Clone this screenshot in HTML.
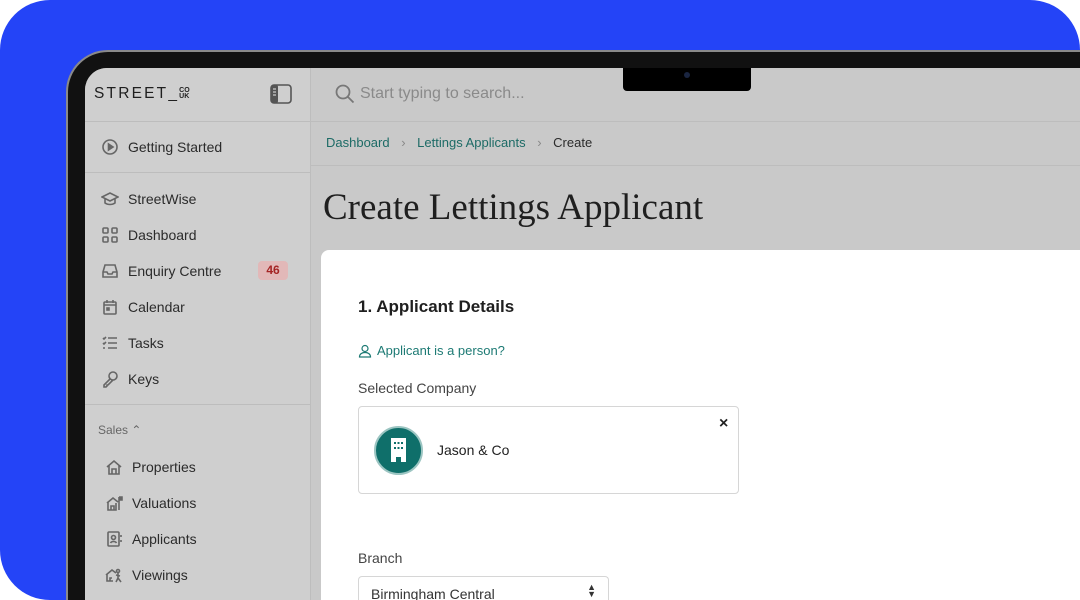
<!DOCTYPE html>
<html><head><style>
*{margin:0;padding:0;box-sizing:border-box}
html,body{width:1080px;height:600px;overflow:hidden}
body{background:#fff;font-family:"Liberation Sans",sans-serif;position:relative}
.bg{position:absolute;inset:0;background:#2444f7;border-radius:50px 50px 0 50px}
.frame{position:absolute;left:66px;top:50px;width:1014px;height:550px;background:#111;border:2px solid #8a8a8a;border-bottom:none;border-right:none;border-radius:42px 0 0 0}
.screen{position:absolute;left:85px;top:68px;width:995px;height:532px;background:#c9c9c9;border-radius:22px 0 0 0;overflow:hidden}
.side{position:absolute;left:0;top:0;width:226px;height:532px;background:#cfcfcf;border-right:1px solid #bdbdbd}
.hline{position:absolute;left:0;right:0;height:1px;background:#bdbdbd}
.item{position:absolute;left:16px;display:flex;align-items:center;font-size:14px;color:#2b2b2b}
.item svg{width:18px;height:18px;margin-right:9px;fill:none;stroke:#666;stroke-width:1.6}
.notch{position:absolute;left:623px;top:68px;width:128px;height:23px;background:#000;border-radius:0 0 4px 4px}
.card{position:absolute;left:236px;top:182px;width:759px;height:350px;background:#fff;border-radius:8px 0 0 0}
</style></head><body>
<div class="bg"></div>
<div class="frame"></div>
<div class="screen">
 <div class="side">
  <div style="position:absolute;left:9px;top:17px;font-size:15.5px;letter-spacing:2.2px;color:#1f1f1f;font-weight:400">STREET_<span style="font-size:7px;letter-spacing:0;display:inline-block;line-height:6px;vertical-align:middle;font-weight:bold">CO<br>UK</span></div>
  <svg style="position:absolute;left:185px;top:16px" width="22" height="20" viewBox="0 0 22 20"><rect x="1" y="1" width="20" height="18" rx="3" fill="none" stroke="#555" stroke-width="1.6"/><rect x="1" y="1" width="7" height="18" rx="2" fill="#555"/><path d="M3 5h3M3 8h3M3 11h3" stroke="#ccc" stroke-width="1.2"/></svg>
  <div class="hline" style="top:53px"></div>
  <div class="item" style="top:70px"><svg viewBox="0 0 18 18"><circle cx="9" cy="9" r="7"/><path d="M7.5 6v6l4.5-3z" fill="#666"/></svg>Getting Started</div>
  <div class="hline" style="top:104px"></div>
  <div class="item" style="top:122px"><svg viewBox="0 0 18 18"><path d="M1 7l8-4 8 4-8 4z M4 9v4c3 2 7 2 10 0V9"/></svg>StreetWise</div>
  <div class="item" style="top:158px"><svg viewBox="0 0 18 18"><rect x="2" y="2" width="5" height="5" rx="1"/><rect x="11" y="2" width="5" height="5" rx="1"/><rect x="2" y="11" width="5" height="5" rx="1"/><rect x="11" y="11" width="5" height="5" rx="1"/></svg>Dashboard</div>
  <div class="item" style="top:194px"><svg viewBox="0 0 18 18"><path d="M2 10l2-7h10l2 7v5H2z M2 10h4l1 2h4l1-2h4"/></svg>Enquiry Centre</div>
  <div style="position:absolute;left:173px;top:193px;width:30px;height:19px;background:#e2b8b8;border-radius:4px;color:#a42424;font-size:12px;font-weight:bold;text-align:center;line-height:19px">46</div>
  <div class="item" style="top:230px"><svg viewBox="0 0 18 18"><rect x="3" y="4" width="12" height="12" rx="1"/><path d="M6 2v3M12 2v3M3 7h12"/><rect x="6" y="10" width="2" height="2" fill="#666"/></svg>Calendar</div>
  <div class="item" style="top:266px"><svg viewBox="0 0 18 18"><path d="M7 4h9M7 9h9M7 14h9M2 4l1 1 2-2M2 9l1 1 2-2M2 14h2"/></svg>Tasks</div>
  <div class="item" style="top:302px"><svg viewBox="0 0 18 18"><circle cx="12" cy="6" r="4"/><path d="M9 9l-6 6v2h2l1-1v-1h1l5-5"/></svg>Keys</div>
  <div class="hline" style="top:336px"></div>
  <div style="position:absolute;left:13px;top:355px;font-size:12px;color:#666">Sales &#8963;</div>
  <div class="item" style="top:390px;left:20px"><svg viewBox="0 0 18 18"><path d="M2 9l7-6 7 6M4 7v9h10V7M7 16v-5h4v5"/></svg>Properties</div>
  <div class="item" style="top:426px;left:20px"><svg viewBox="0 0 18 18"><path d="M2 9l6-5 5 4M3 8v8h8V9M6 16v-4h3v4M14 3v13"/><path d="M14 3h3v3h-3" fill="#666"/></svg>Valuations</div>
  <div class="item" style="top:462px;left:20px"><svg viewBox="0 0 18 18"><rect x="3" y="2" width="11" height="14" rx="1"/><circle cx="8.5" cy="7.5" r="2"/><path d="M5.5 13c1-2 5-2 6 0M16 5v2M16 10v2"/></svg>Applicants</div>
  <div class="item" style="top:498px;left:20px"><svg viewBox="0 0 18 18"><path d="M1 9l6-5 4 3M2 8v7h6M5 15v-3h2"/><circle cx="13" cy="5" r="1.5"/><path d="M13 7v5l-2 4M13 12l3 4M11 9l4 1"/></svg>Viewings</div>
 </div>
 <div class="hline" style="top:53px;left:226px"></div>
 <svg style="position:absolute;left:250px;top:16px" width="20" height="20" viewBox="0 0 20 20" fill="none" stroke="#777" stroke-width="1.8"><circle cx="8" cy="8" r="6.5"/><path d="M13 13l5.5 5.5"/></svg>
 <div style="position:absolute;left:275px;top:17px;font-size:16px;color:#8a8a8a">Start typing to search...</div>
 <div style="position:absolute;left:241px;top:67px;font-size:13px;color:#1d6b66">Dashboard <span style="color:#888;margin:0 8px">&#8250;</span> Lettings Applicants <span style="color:#888;margin:0 8px">&#8250;</span> <span style="color:#2b2b2b">Create</span></div>
 <div class="hline" style="top:97px;left:226px"></div>
 <div style="position:absolute;left:238px;top:118px;font-family:'Liberation Serif',serif;font-size:37px;color:#1f1f1f">Create Lettings Applicant</div>
 <div class="card">
  <div style="position:absolute;left:37px;top:47px;font-size:17px;font-weight:bold;color:#1f1f1f">1. Applicant Details</div>
  <div style="position:absolute;left:37px;top:93px;font-size:13px;color:#1d7a74;display:flex;align-items:center"><svg width="14" height="14" viewBox="0 0 14 14" fill="none" stroke="#1d7a74" stroke-width="1.2" style="margin-right:5px"><circle cx="7" cy="4.5" r="3"/><path d="M1.5 13c0-3 2.5-4.5 5.5-4.5s5.5 1.5 5.5 4.5z"/></svg>Applicant is a person?</div>
  <div style="position:absolute;left:37px;top:130px;font-size:14px;color:#444">Selected Company</div>
  <div style="position:absolute;left:37px;top:156px;width:381px;height:88px;border:1px solid #d6d6d6;border-radius:4px">
   <div style="position:absolute;left:15px;top:19px;width:49px;height:49px;border-radius:50%;background:#0f6f6a;border:2px solid #9cc5c2"></div>
   <svg style="position:absolute;left:30px;top:29px" width="19" height="28" viewBox="0 0 19 28"><path d="M2 2h15v24h-5v-5h-5v5H2z" fill="#fff"/><g fill="#0f6f6a"><rect x="5" y="6" width="2" height="2"/><rect x="8.5" y="6" width="2" height="2"/><rect x="12" y="6" width="2" height="2"/><rect x="5" y="11" width="2" height="2"/><rect x="8.5" y="11" width="2" height="2"/><rect x="12" y="11" width="2" height="2"/></g></svg>
   <div style="position:absolute;left:78px;top:35px;font-size:14px;color:#1f1f1f">Jason &amp; Co</div>
   <div style="position:absolute;left:360px;top:8px;font-size:16px;color:#222;font-weight:bold">&#215;</div>
  </div>
  <div style="position:absolute;left:37px;top:300px;font-size:14px;color:#444">Branch</div>
  <div style="position:absolute;left:37px;top:326px;width:251px;height:24px;border:1px solid #d6d6d6;border-bottom:none;border-radius:4px 4px 0 0;font-size:14px;color:#333;padding:9px 12px 0;overflow:hidden">Birmingham Central<span style="position:absolute;right:12px;top:7px;font-size:9px;line-height:7px">&#9650;<br>&#9660;</span></div>
 </div>
</div>
<div class="notch"><div style="position:absolute;left:61px;top:4px;width:6px;height:6px;border-radius:50%;background:#1a2540"></div></div>
</body></html>
